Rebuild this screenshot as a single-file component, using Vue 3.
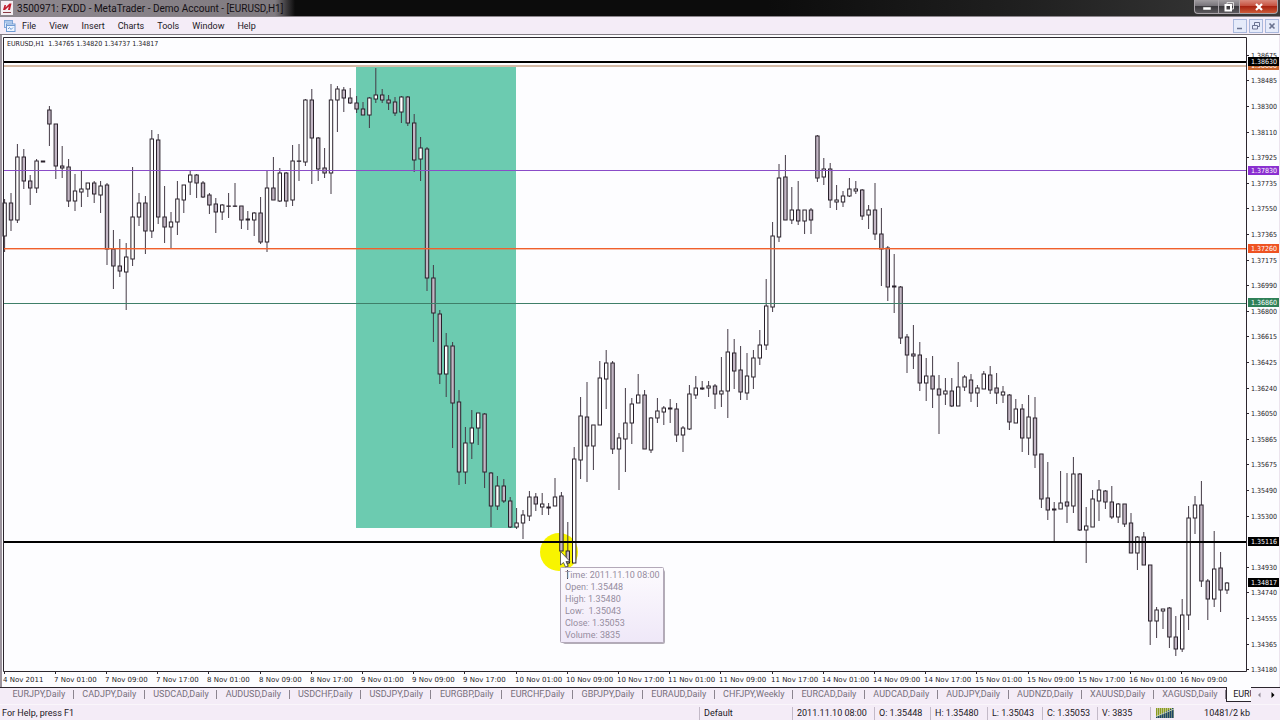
<script setup>
const menus = ['File', 'View', 'Insert', 'Charts', 'Tools', 'Window', 'Help']

const tabs = [
  'EURJPY,Daily', 'CADJPY,Daily', 'USDCAD,Daily', 'AUDUSD,Daily', 'USDCHF,Daily', 'USDJPY,Daily',
  'EURGBP,Daily', 'EURCHF,Daily', 'GBPJPY,Daily', 'EURAUD,Daily', 'CHFJPY,Weekly', 'EURCAD,Daily',
  'AUDCAD,Daily', 'AUDJPY,Daily', 'AUDNZD,Daily', 'XAUUSD,Daily', 'XAGUSD,Daily'
]

const prices = [
  '1.38675', '1.38485', '1.38300', '1.38110', '1.37925', '1.37735', '1.37550', '1.37365', '1.37175',
  '1.36990', '1.36800', '1.36615', '1.36425', '1.36240', '1.36050', '1.35865', '1.35675', '1.35490',
  '1.35300', '', '1.34930', '1.34740', '1.34555', '1.34365', '1.34180'
].map((label, i) => ({ label, y: Math.round(54.8 + 25.6 * i) })).filter(p => p.label)

const times = [
  '4 Nov 2011', '7 Nov 01:00', '7 Nov 09:00', '7 Nov 17:00', '8 Nov 01:00', '8 Nov 09:00', '8 Nov 17:00',
  '9 Nov 01:00', '9 Nov 09:00', '9 Nov 17:00', '10 Nov 01:00', '10 Nov 09:00', '10 Nov 17:00',
  '11 Nov 01:00', '11 Nov 09:00', '11 Nov 17:00', '14 Nov 01:00', '14 Nov 09:00', '14 Nov 17:00',
  '15 Nov 01:00', '15 Nov 09:00', '15 Nov 17:00', '16 Nov 01:00', '16 Nov 09:00'
].map((label, i) => ({ label, x: Math.round(3.6 + 51.2 * i) }))

const tags = [
  { label: '1.38600', y: 65, color: '#c8642c' },
  { label: '1.38630', y: 61, color: '#000' },
  { label: '1.37830', y: 170, color: '#8a2fd0' },
  { label: '1.37260', y: 248, color: '#ee5222' },
  { label: '1.36860', y: 302, color: '#2f8058' },
  { label: '1.35116', y: 541, color: '#000' },
  { label: '1.34817', y: 582, color: '#000' }
]

// Each bar: wick top, body top, body bottom, wick bottom, 1 = falling
const bars = [
  [199,203,236,252,0],[193,203,220,231,1],[144,157,220,223,0],[149,157,181,189,1],[175,181,188,205,1],
  [159,161,188,193,0],[161,161,162,162,1],[106,110,124,146,1],[124,124,166,179,1],[146,166,168,178,1],
  [159,167,201,207,1],[174,191,201,211,0],[171,189,192,207,0],[183,183,189,197,0],[181,183,194,203,1],
  [181,186,195,213,0],[183,185,249,265,1],[230,249,266,289,1],[239,266,271,277,1],[243,257,272,310,0],
  [167,217,259,266,0],[193,203,217,226,0],[196,203,231,254,1],[130,139,231,238,0],[134,140,217,224,1],
  [186,217,227,243,1],[212,222,227,249,0],[181,199,222,235,0],[185,185,200,213,0],[170,175,182,195,0],
  [174,175,183,198,1],[181,183,197,198,1],[193,195,205,214,1],[198,204,212,233,1],[204,205,212,220,0],
  [193,206,206,218,1],[183,206,206,207,1],[206,206,220,229,1],[211,219,220,230,1],[212,213,220,236,0],
  [197,213,242,244,1],[171,188,242,252,0],[157,188,200,200,1],[168,173,201,202,0],[172,173,201,207,1],
  [145,161,200,206,0],[144,161,161,181,1],[99,100,162,166,0],[89,100,138,184,1],[137,138,169,181,1],
  [148,168,173,178,1],[84,100,173,194,0],[86,89,100,132,0],[87,90,98,112,1],[88,98,103,104,1],
  [96,103,109,113,1],[102,109,115,115,1],[97,98,115,128,0],[68,95,99,103,0],[89,95,100,103,1],
  [95,100,103,110,1],[97,102,113,116,1],[96,97,112,123,0],[96,97,123,126,1],[114,123,160,172,1],
  [137,148,159,181,0],[147,149,278,291,1],[265,278,313,342,1],[310,314,374,384,1],[333,346,374,397,0],
  [342,346,403,448,1],[390,402,472,485,1],[427,443,472,484,0],[410,428,443,459,0],[413,413,428,445,0],
  [413,414,472,488,1],[472,473,506,527,1],[476,486,506,510,0],[479,486,501,503,1],[497,501,527,528,1],
  [508,523,527,529,0],[510,515,523,539,0],[491,497,516,521,0],[493,497,504,511,1],[493,504,507,515,0],
  [503,507,508,515,1],[478,497,506,506,0],[492,496,551,551,1],[522,551,563,580,1],[447,459,563,563,0],
  [397,416,460,479,0],[382,417,446,482,1],[425,425,446,470,0],[361,378,425,425,0],[350,363,379,409,0],
  [361,363,449,454,1],[433,438,449,490,0],[388,423,439,472,0],[398,404,423,444,0],[374,395,403,403,0],
  [390,395,449,449,1],[417,418,450,453,0],[398,411,418,423,0],[406,408,412,425,0],[399,408,409,423,1],
  [403,409,435,442,1],[426,428,435,452,0],[385,394,429,430,0],[376,388,395,399,0],[381,388,389,390,1],
  [381,386,388,397,0],[384,386,394,409,1],[357,391,394,407,0],[329,352,391,418,0],[339,353,371,389,1],
  [346,370,392,400,1],[353,376,393,400,0],[350,358,377,389,0],[330,345,358,365,0],[279,306,345,350,0],
  [222,236,307,312,0],[164,178,237,242,0],[155,177,220,220,1],[187,210,220,224,0],[181,210,221,225,1],
  [210,210,221,234,0],[208,210,220,234,1],[135,136,178,182,1],[158,169,177,185,0],[163,169,200,208,1],
  [185,200,202,210,0],[191,196,202,207,0],[178,189,196,197,0],[181,189,191,194,0],[189,190,216,220,1],
  [205,210,215,229,0],[183,210,234,240,1],[208,234,249,286,1],[246,248,287,301,1],[254,286,287,313,1],
  [286,287,338,344,1],[334,337,355,373,1],[325,354,356,369,1],[342,355,383,391,1],[358,376,383,401,0],
  [356,376,389,408,1],[375,389,395,434,1],[378,391,394,405,0],[378,391,406,407,1],[362,387,406,406,0],
  [375,377,387,391,0],[374,380,393,402,1],[385,388,393,407,0],[371,374,389,389,0],[366,375,390,394,1],
  [373,388,393,404,1],[386,392,395,403,0],[394,395,422,430,1],[399,409,423,423,0],[404,409,438,452,1],
  [395,417,438,455,0],[397,418,455,468,1],[454,454,499,508,1],[462,498,510,520,1],[502,509,510,541,1],
  [471,503,509,509,0],[473,502,506,523,1],[457,474,506,513,0],[473,474,530,531,1],[507,526,530,563,0],
  [490,499,527,527,0],[480,490,501,521,0],[490,491,502,509,1],[486,502,517,519,1],[503,504,517,523,0],
  [504,504,524,527,1],[513,523,553,553,1],[536,537,553,570,0],[532,537,565,565,1],[565,565,621,645,1],
  [607,610,621,638,0],[609,609,611,629,0],[607,608,637,648,1],[616,637,649,656,1],[599,615,649,652,0],
  [506,518,615,630,0],[496,505,518,534,0],[481,505,581,587,1],[579,581,599,620,1],[531,569,599,607,0],
  [552,568,590,612,1],[582,583,590,594,0]
].map(([high, top, bottom, low, down], i) => ({ x: 4.6 + 6.4 * i, high, top, bottom, low, down }))

const tip = [
  'Time: 2011.11.10 08:00', 'Open: 1.35448', 'High: 1.35480', 'Low:  1.35043', 'Close: 1.35053', 'Volume: 3835'
]

const readouts = ['2011.11.10 08:00', 'O: 1.35448', 'H: 1.35480', 'L: 1.35043', 'C: 1.35053', 'V: 3835']
</script>

<template>
  <div class="window">
    <header class="titlebar">
      <svg class="app-icon" viewBox="0 0 12 14" aria-hidden="true">
        <rect width="12" height="14" fill="#f3eef2" />
        <path d="M2 9 L3.500 4 H5 L4.500 6.500 L8.500 2.500 H10.500 L9 9 H7 L7.800 5.500 L4 9 Z" fill="#c11b2c" />
        <path d="M2 11.500 H10" stroke="#8a3a44" stroke-width="1" />
      </svg>
      <h1>3500971: FXDD - MetaTrader - Demo Account - [EURUSD,H1]</h1>
      <div class="caption-buttons">
        <button class="cap min" aria-label="Minimize">
          <svg viewBox="0 0 12 12"><rect x="2" y="6" width="8" height="3" fill="#fff" stroke="#555" stroke-width=".5" /></svg>
        </button>
        <button class="cap restore" aria-label="Restore">
          <svg viewBox="0 0 12 12"><path d="M4 3.500 V1.500 H10.500 V8 H8.500" fill="none" stroke="#ddd" /><rect x="2.500" y="4" width="5.500" height="5.500" fill="none" stroke="#fff" stroke-width="2" /></svg>
        </button>
        <button class="cap close" aria-label="Close">
          <svg viewBox="0 0 12 12"><path d="M3 3 L9 9 M9 3 L3 9" stroke="#fff" stroke-width="2.200" /></svg>
        </button>
      </div>
    </header>

    <nav class="menubar">
      <svg class="doc-icon" viewBox="0 0 12 12" aria-hidden="true">
        <rect x=".5" y=".5" width="8" height="7" fill="#dbe9fb" stroke="#7fa6d8" />
        <path d="M.5 2 H8.500" stroke="#7fa6d8" />
        <rect x="2.500" y="4" width="8.500" height="7.500" fill="#eef5ff" stroke="#6f9ad2" />
        <path d="M2.500 5.500 H11 M4 9 L5.500 7.500 L7 9.500 L9 7.500" fill="none" stroke="#6f9ad2" />
      </svg>
      <button v-for="m in menus" :key="m" class="menu">{{ m }}</button>
      <div class="mdi">
        <button aria-label="Minimize chart"><svg viewBox="0 0 12 12"><path d="M3 8.500 H8" stroke="#6b7390" stroke-width="1.500" /></svg></button>
        <button aria-label="Restore chart"><svg viewBox="0 0 12 12"><path d="M4.500 5 V2.500 H9.500 V6.500 H8 M2.500 5.500 H7.500 V9 H2.500 Z" fill="none" stroke="#6b7390" /></svg></button>
        <button aria-label="Close chart"><svg viewBox="0 0 12 12"><path d="M3.500 3.500 L8.500 8.500 M8.500 3.500 L3.500 8.500" stroke="#6b7390" stroke-width="1.600" /></svg></button>
      </div>
    </nav>

    <main>
      <svg class="chart" viewBox="0 35 1280 652" role="img" aria-label="EURUSD H1 candlestick chart">
        <rect x="0" y="35" width="1280" height="652" fill="#fdfdff" />
        <rect x="0" y="35" width="2" height="652" fill="#9c949e" />
        <rect x="1279" y="35" width="1" height="652" fill="#ece4ee" />

        <rect x="356" y="66" width="160" height="462" fill="#6ccbb0" />
        <circle cx="559" cy="552" r="19" fill="#f8f400" />

        <g class="bars">
          <g v-for="b in bars" :key="b.x">
            <line :x1="b.x" :x2="b.x" :y1="b.high" :y2="b.low" />
            <rect
              :x="b.x - 1.7" :y="b.top" width="3.4" :height="Math.max(b.bottom - b.top, 0.3)"
              :class="b.down ? 'down' : 'up'"
            />
          </g>
        </g>

        <rect x="4" y="61" width="1243" height="2" fill="#000" />
        <rect x="4" y="65" width="1243" height="2" fill="#d5baa6" />
        <rect x="4" y="170" width="1243" height="1" fill="#8a4cc8" />
        <rect x="4" y="248" width="1243" height="1" fill="#f0602c" />
        <rect x="4" y="249" width="1243" height="1" fill="#f0602c" fill-opacity=".4" />
        <rect x="4" y="303" width="1243" height="1" fill="#3f7f69" />
        <rect x="4" y="541" width="1243" height="2" fill="#000" />

        <path d="M3.500 671.500 V37.500 H1246.500 V671.500 Z" fill="none" stroke="#2c262e" />
        <text x="7" y="46" class="small">EURUSD,H1&#160; 1.34765 1.34820 1.34737 1.34817</text>

        <g v-for="p in prices" :key="p.label">
          <rect x="1247" :y="p.y" width="2" height="1" fill="#2c262e" />
          <text x="1251" :y="p.y + 3" class="small">{{ p.label }}</text>
        </g>
        <g v-for="t in tags" :key="t.label">
          <rect x="1248" :y="t.y - 4" width="31" height="9" :fill="t.color" />
          <text x="1251" :y="t.y + 3" class="small light">{{ t.label }}</text>
        </g>
        <g v-for="t in times" :key="t.label">
          <rect :x="t.x" y="672" width="1" height="2" fill="#2c262e" />
          <text :x="t.x - 1" y="682" class="small time">{{ t.label }}</text>
        </g>

        <g>
          <rect x="563" y="570" width="102" height="74" rx="2" fill="#9a929f" fill-opacity=".75" />
          <rect x="560.5" y="567.500" width="103" height="75" rx="1" fill="url(#tipfill)" stroke="#b3a9b9" />
          <rect x="567" y="570" width="1" height="9" fill="#4a404c" />
          <text v-for="(t, i) in tip" :key="t" x="565" :y="578 + 12 * i" class="tip">{{ t }}</text>
        </g>
        <path d="M560.5 551.500 V565 L563.5 562.500 L565.5 567 L568 566 L566 561.500 H570 Z" fill="#fff" stroke="#444" stroke-width=".8" />
        <defs>
          <linearGradient id="tipfill" x1="0" y1="0" x2="0" y2="1">
            <stop offset="0" stop-color="#fdfbfe" />
            <stop offset="1" stop-color="#efe8f8" />
          </linearGradient>
        </defs>
      </svg>
    </main>

    <nav class="tabs">
      <button v-for="t in tabs" :key="t" class="tab">{{ t }}</button>
      <button class="tab active">EURUSD,H1</button>
      <div class="scrollers">
        <button aria-label="Scroll tabs left"><svg viewBox="0 0 6 8"><path d="M4.500 1.500 L2 4 L4.500 6.500 Z" fill="#8f8794" /></svg></button>
        <button aria-label="Scroll tabs right"><svg viewBox="0 0 6 8"><path d="M1.500 1 L4.500 4 L1.500 7 Z" fill="#000" /></svg></button>
      </div>
    </nav>

    <footer class="status">
      <span class="help">For Help, press F1</span>
      <span class="cell">Default</span>
      <span v-for="r in readouts" :key="r" class="cell">{{ r }}</span>
      <span class="cell traffic">
        <svg viewBox="0 0 20 12" aria-hidden="true">
          <rect v-for="n in 9" :key="n" :x="2 * n - 1" y="1" width="1.500" height="10" fill="#8a9c20" />
          <rect v-for="n in 9" :key="'b' + n" :x="2 * n - 1" :y="10 - n" width="1.500" :height="n + 1" fill="#1d4668" />
          <path d="M1 9.500 L19 2" stroke="#e9f0c0" stroke-width=".8" />
        </svg>
        <span>10481/2 kb</span>
      </span>
    </footer>
  </div>
</template>

<style>
body {
  margin: 0;
  background: #f4ecf7;
}
</style>

<style scoped>
.window {
  display: flex;
  flex-direction: column;
  min-height: 100vh;
  font-family: Roboto, "Liberation Sans", sans-serif;
  font-size: 9px;
  color: #1c181e;
  background: #f4ecf7;
}

button {
  padding: 0;
  border: 0;
  background: none;
  font: inherit;
  color: inherit;
}

button svg {
  display: block;
}

.titlebar {
  display: flex;
  align-items: center;
  height: 17px;
  box-sizing: border-box;
  border-bottom: 1px solid #8c868c;
  background:
    linear-gradient(90deg, rgba(150, 143, 150, 0.95) 0, rgba(140, 134, 140, 0.9) 275px, transparent 295px),
    linear-gradient(90deg, #0c0c0c 0, #0c0c0c 60%, #202020 80%, #3a3a3a 100%);
}

.app-icon {
  width: 12px;
  height: 14px;
  margin: 0 4px 0 1px;
}

h1 {
  flex: 1;
  margin: 0;
  padding-top: 1px;
  font-size: 10px;
  line-height: 15px;
  font-weight: 400;
  color: #141014;
}

.caption-buttons {
  display: flex;
  align-self: flex-start;
  margin-right: 2px;
}

.cap {
  display: grid;
  place-items: center;
  height: 14px;
  box-sizing: border-box;
  border: 1px solid #a9a4a9;
  border-top: 0;
  border-right: 0;
  background: linear-gradient(#a09ca0 0, #77747a 45%, #3a383c 50%, #5c5a5e 100%);
}

.cap svg {
  width: 12px;
  height: 12px;
}

.min {
  width: 24px;
  border-bottom-left-radius: 4px;
}

.restore {
  width: 21px;
}

.close {
  width: 39px;
  border-right: 1px solid #a9a4a9;
  border-bottom-right-radius: 4px;
  background: linear-gradient(#d9897c 0, #c65240 45%, #a82412 50%, #cc5a38 100%);
}

.menubar {
  display: flex;
  align-items: center;
  height: 18px;
  box-sizing: border-box;
  border-bottom: 1px solid #827c84;
  background: #f4ecf7;
}

.doc-icon {
  width: 12px;
  height: 12px;
  margin: 0 6px 0 4px;
}

.menu {
  margin-right: 13px;
  padding-top: 2px;
  line-height: 15px;
}

.mdi {
  display: flex;
  gap: 2px;
  margin-left: auto;
  margin-right: 1px;
}

.mdi button {
  width: 14px;
  height: 14px;
  box-sizing: border-box;
  border: 1px solid #a9b8dc;
  background: #e6ebfa;
}

.mdi svg {
  width: 12px;
  height: 12px;
}

main {
  flex: 1;
}

.chart {
  display: block;
  width: 100%;
}

.bars line {
  stroke: #443a46;
  stroke-width: 1;
}

.bars rect {
  stroke: #2a222c;
  stroke-width: 1;
}

.up {
  fill: #fff;
}

.down {
  fill: #c2b6c4;
}

.small {
  font-family: "DejaVu Sans Condensed", "Noto Sans", sans-serif;
  font-size: 7px;
  fill: #1c181e;
}

.time {
  font-family: "DejaVu Sans", "Noto Sans", sans-serif;
}

.light {
  fill: #fff;
}

.tip {
  font-size: 9px;
  fill: #958c9e;
  white-space: pre;
}

.tabs {
  display: flex;
  height: 17px;
  padding-left: 4px;
  color: #77707c;
  box-shadow: inset 0 1px #2c262e;
}

.tab {
  position: relative;
  flex: 1 0 auto;
  height: 15px;
  padding: 0 8px;
  line-height: 15px;
}

.tab::after {
  content: "";
  position: absolute;
  top: 3px;
  right: 0;
  height: 9px;
  border-right: 1px solid #8b848f;
}

.tab.active {
  flex: 0 0 25px;
  overflow: hidden;
  box-sizing: border-box;
  padding: 0 0 0 6px;
  border-left: 1px solid #2c262e;
  border-bottom: 1px solid #2c262e;
  background: #fdfdff;
  color: #1c181e;
  text-align: left;
}

.tab.active::after {
  display: none;
}

.scrollers {
  display: flex;
  flex: 0 0 29px;
  justify-content: space-between;
  align-items: center;
  height: 15px;
  box-sizing: border-box;
  padding: 1px 4px 0 5px;
}

.scrollers svg {
  width: 6px;
  height: 8px;
}

.status {
  display: grid;
  grid-template-columns: 1fr 93px 82px 56px 57px 55px 55px 53px 130px;
  height: 16px;
  align-items: center;
  line-height: 13px;
  padding-top: 1px;
  border-top: 1px solid #faf6fb;
  box-sizing: border-box;
}

.help {
  padding-left: 2px;
}

.cell {
  padding-left: 4px;
  border-left: 1px solid #c3bac8;
  white-space: nowrap;
}

.traffic {
  display: flex;
  align-items: center;
  justify-content: space-between;
  padding-right: 30px;
}

.traffic svg {
  width: 20px;
  height: 12px;
}
</style>
